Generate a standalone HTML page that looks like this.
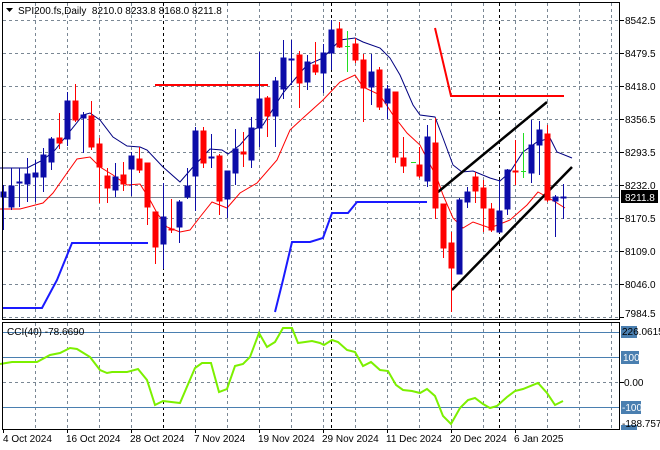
<!DOCTYPE html>
<html><head><meta charset="utf-8"><style>
html,body{margin:0;padding:0;background:#fff;width:660px;height:450px;overflow:hidden}
svg{display:block;font-family:"Liberation Sans",sans-serif}
</style></head><body>
<svg width="660" height="450" viewBox="0 0 660 450" xmlns="http://www.w3.org/2000/svg">
<rect width="660" height="450" fill="#fff"/>
<g stroke="#7a8794" stroke-width="1" stroke-dasharray="3,3">
<path d="M35.5 3V319M67.5 3V319M99.5 3V319M131.5 3V319M195.5 3V319M227.5 3V319M259.5 3V319M291.5 3V319M323.5 3V319M355.5 3V319M387.5 3V319M419.5 3V319M451.5 3V319M483.5 3V319M515.5 3V319M547.5 3V319M579.5 3V319M611.5 3V319"/>
<path d="M35.5 323V429M67.5 323V429M99.5 323V429M131.5 323V429M195.5 323V429M227.5 323V429M259.5 323V429M291.5 323V429M323.5 323V429M355.5 323V429M387.5 323V429M419.5 323V429M451.5 323V429M483.5 323V429M515.5 323V429M547.5 323V429M579.5 323V429M611.5 323V429"/>
<path d="M3 20.5H619M3 53.5H619M3 86.5H619M3 119.5H619M3 152.5H619M3 185.5H619M3 218.5H619M3 251.5H619M3 284.5H619M3 317.5H619M3 382.5H619"/>
</g>
<g stroke="#000" stroke-width="1" stroke-dasharray="3,3">
<path d="M163.5 3V319M331.5 3V319M499.5 3V319M163.5 323V429M331.5 323V429M499.5 323V429"/>
</g>
<g stroke="#4a7fb0" stroke-width="1"><path d="M3 332.5H619M3 357.5H619M3 407.5H619"/></g>
<path d="M3 197.5H619" stroke="#7a8794" stroke-width="1"/>
<polyline fill="none" stroke="#1a1aff" stroke-width="2" points="3,308 42,308 57,280 72,243 148,243"/>
<polyline fill="none" stroke="#1a1aff" stroke-width="2" points="275,312 283,280 292,242 310,242 323,238 332,213 348,213 357,202 427,202"/>
<path d="M155 85H268" stroke="#f00" stroke-width="2"/>
<polyline fill="none" stroke="#f00" stroke-width="2" points="435,28 451,96 564,96"/>
<polyline fill="none" stroke="#000080" stroke-width="1" points="0,168 27,168 43,160 55,150 67,135 83,115 90,113 100,120 113,137 127,146 140,147 147,150 163,167 180,182 193,167 210,149 222,150 228,154 240,145 253,130 263,125 283,93 300,73 307,65 323,58 340,40 355,38 363,42 380,48 390,58 400,75 413,105 420,115 435,117 443,138 453,165 462,172 473,171 490,178 500,181 510,172 523,152 537,142 550,138 557,152 572,158"/>
<polyline fill="none" stroke="#f00" stroke-width="1" points="0,209 20,209 43,203 53,193 67,173 77,159 90,157 100,167 113,175 127,185 140,184 150,200 157,213 167,227 180,232 190,230 200,217 212,202 227,208 240,193 257,183 277,160 290,130 303,118 323,100 340,82 355,75 363,87 380,95 393,115 407,133 420,145 437,178 443,195 453,218 463,228 473,222 490,228 510,220 527,205 538,192 547,197 557,203 565,208"/>
<g stroke="#000" stroke-width="2.5"><path d="M438 192L547 102M452 290L572 167"/></g>
<g stroke="#0c0ca8" fill="#0c0ca8" stroke-width="1">
<path fill="none" d="M3.5 185V230M11.5 168V210M19.5 168V207M27.5 158V202M35.5 160V202M43.5 148V192M51.5 137V170M67.5 92V146M83.5 112V153M115.5 163V197M131.5 152V196M163.5 183V269M179.5 200V243M187.5 168V199M195.5 127V211M211.5 134V168M227.5 171V218M235.5 129V185M251.5 117V168M259.5 52V147M275.5 77V147M283.5 40V99M291.5 40V85M307.5 55V90M323.5 44V93M331.5 20V70M371.5 54V105M387.5 85V119M427.5 125V187M459.5 198V274M467.5 187V208M499.5 180V233M507.5 169V215M531.5 120V183M539.5 121V175M555.5 195V237M563.5 184V219"/>
<rect x="1" y="192" width="5" height="5"/><rect x="9" y="186" width="5" height="21"/><rect x="17" y="182" width="5" height="1"/><rect x="25" y="174" width="5" height="10"/><rect x="33" y="173" width="5" height="4"/><rect x="41" y="155" width="5" height="22"/><rect x="49" y="139" width="5" height="23"/><rect x="65" y="101" width="5" height="38"/><rect x="81" y="115" width="5" height="3"/><rect x="113" y="177" width="5" height="13"/><rect x="129" y="156" width="5" height="13"/><rect x="161" y="217" width="5" height="27"/><rect x="177" y="202" width="5" height="25"/><rect x="185" y="186" width="5" height="11"/><rect x="193" y="131" width="5" height="45"/><rect x="209" y="157" width="5" height="1"/><rect x="225" y="171" width="5" height="28"/><rect x="233" y="149" width="5" height="24"/><rect x="249" y="128" width="5" height="32"/><rect x="257" y="99" width="5" height="29"/><rect x="273" y="81" width="5" height="35"/><rect x="281" y="58" width="5" height="31"/><rect x="289" y="59" width="5" height="1"/><rect x="305" y="62" width="5" height="20"/><rect x="321" y="53" width="5" height="20"/><rect x="329" y="30" width="5" height="23"/><rect x="369" y="72" width="5" height="15"/><rect x="385" y="89" width="5" height="14"/><rect x="425" y="137" width="5" height="44"/><rect x="457" y="200" width="5" height="74"/><rect x="465" y="192" width="5" height="10"/><rect x="497" y="211" width="5" height="21"/><rect x="505" y="170" width="5" height="39"/><rect x="529" y="145" width="5" height="28"/><rect x="537" y="130" width="5" height="15"/><rect x="553" y="197" width="5" height="4"/><rect x="561" y="197" width="5" height="1"/>
</g>
<g stroke="#f00" fill="#f00" stroke-width="1">
<path fill="none" d="M59.5 113V149M75.5 84V122M91.5 101V150M99.5 138V203M107.5 168V203M123.5 162V191M139.5 147V173M147.5 163V225M155.5 212V264M171.5 199V233M203.5 127V168M219.5 154V215M243.5 132V167M267.5 96V137M299.5 51V108M315.5 42V75M339.5 22V48M355.5 38V63M363.5 54V122M379.5 67V110M395.5 92V163M403.5 137V173M419.5 147V178M435.5 118V219M443.5 204V258M451.5 232V312M475.5 172V203M483.5 180V232M491.5 203V232M515.5 140V185M547.5 125V202"/>
<rect x="57" y="138" width="5" height="5"/><rect x="73" y="101" width="5" height="19"/><rect x="89" y="116" width="5" height="31"/><rect x="97" y="144" width="5" height="23"/><rect x="105" y="176" width="5" height="12"/><rect x="121" y="175" width="5" height="9"/><rect x="137" y="159" width="5" height="11"/><rect x="145" y="163" width="5" height="44"/><rect x="153" y="212" width="5" height="35"/><rect x="169" y="229" width="5" height="1"/><rect x="201" y="131" width="5" height="32"/><rect x="217" y="156" width="5" height="45"/><rect x="241" y="152" width="5" height="2"/><rect x="265" y="98" width="5" height="18"/><rect x="297" y="55" width="5" height="28"/><rect x="313" y="65" width="5" height="7"/><rect x="337" y="29" width="5" height="18"/><rect x="353" y="44" width="5" height="16"/><rect x="361" y="60" width="5" height="28"/><rect x="377" y="70" width="5" height="37"/><rect x="393" y="92" width="5" height="65"/><rect x="401" y="158" width="5" height="8"/><rect x="417" y="165" width="5" height="11"/><rect x="433" y="143" width="5" height="65"/><rect x="441" y="204" width="5" height="44"/><rect x="449" y="243" width="5" height="25"/><rect x="473" y="177" width="5" height="14"/><rect x="481" y="188" width="5" height="20"/><rect x="489" y="209" width="5" height="21"/><rect x="513" y="171" width="5" height="1"/><rect x="545" y="134" width="5" height="66"/>
</g>
<g stroke="#22dd22" stroke-width="1"><path d="M347.5 31V72M345 46.5H350M411 162.5H416M523.5 133V178M521 171.5H526"/></g>
<polyline fill="none" stroke="#7cf000" stroke-width="2" points="0,364 12,362 37,362 50,355 60,353 70,348 77,349 90,357 100,370 107,373 112,372 127,372 138,369 147,380 155,405 163,401 180,403 195,368 202,363 211,363 219,392 227,389 235,366 243,364 250,357 259,333 267,347 275,342 283,328 292,328 298,343 312,341 320,343 324,345 332,340 338,342 347,350 355,352 363,366 371,362 380,370 388,371 396,385 403,390 412,391 420,393 427,389 435,396 443,416 451,424 460,408 468,400 475,398 483,404 490,408 497,406 507,397 515,391 523,389 538,383 547,393 555,405 563,401"/>
<rect x="2.5" y="2.5" width="617" height="317" fill="none" stroke="#000"/>
<rect x="2.5" y="322.5" width="617" height="107" fill="none" stroke="#000"/>
<path d="M6 8H13L9.5 12Z" fill="#000"/>
<text x="18" y="14" font-size="10" fill="#000" xml:space="preserve">SPI200.fs,Daily  8210.0 8233.8 8168.0 8211.8</text>
<text x="7" y="335" font-size="10" fill="#000">CCI(40) -78.6690</text>
<g font-size="10" fill="#000">
<path d="M620 20.5H624M620 53.5H624M620 86.5H624M620 119.5H624M620 152.5H624M620 185.5H624M620 218.5H624M620 251.5H624M620 284.5H624M620 317.5H624M620 382.5H624" stroke="#000"/>
<text x="625" y="24">8542.5</text><text x="625" y="57">8479.5</text><text x="625" y="90">8418.0</text><text x="625" y="123">8356.5</text><text x="625" y="156">8293.5</text><text x="625" y="189">8232.0</text><text x="625" y="222">8170.5</text><text x="625" y="255">8109.0</text><text x="625" y="288">8046.0</text><text x="625" y="317">7984.5</text>
<rect x="621" y="190" width="37" height="13" fill="#000"/>
<text x="625" y="201" fill="#fff">8211.8</text>
<rect x="621" y="326" width="16" height="12" fill="#4a7fb0"/>
<text x="622" y="335">226.0615</text>
<rect x="621" y="351" width="18" height="13" fill="#4a7fb0"/><text x="623" y="361" fill="#fff">100</text>
<text x="624" y="386">0.00</text>
<rect x="621" y="401" width="20" height="13" fill="#4a7fb0"/><text x="622" y="411" fill="#fff">-100</text>
<rect x="621" y="425" width="16" height="5" fill="#4a7fb0"/>
<text x="622" y="427">-188.7573</text>
</g>
<g stroke="#000"><path d="M3.5 429V433M67.5 429V433M131.5 429V433M195.5 429V433M259.5 429V433M323.5 429V433M387.5 429V433M451.5 429V433M515.5 429V433"/></g>
<g font-size="10" fill="#000">
<text x="3" y="442">4 Oct 2024</text><text x="66" y="442">16 Oct 2024</text><text x="130" y="442">28 Oct 2024</text><text x="194" y="442">7 Nov 2024</text><text x="258" y="442">19 Nov 2024</text><text x="322" y="442">29 Nov 2024</text><text x="386" y="442">11 Dec 2024</text><text x="450" y="442">20 Dec 2024</text><text x="514" y="442">6 Jan 2025</text>
</g>
</svg>
</body></html>
